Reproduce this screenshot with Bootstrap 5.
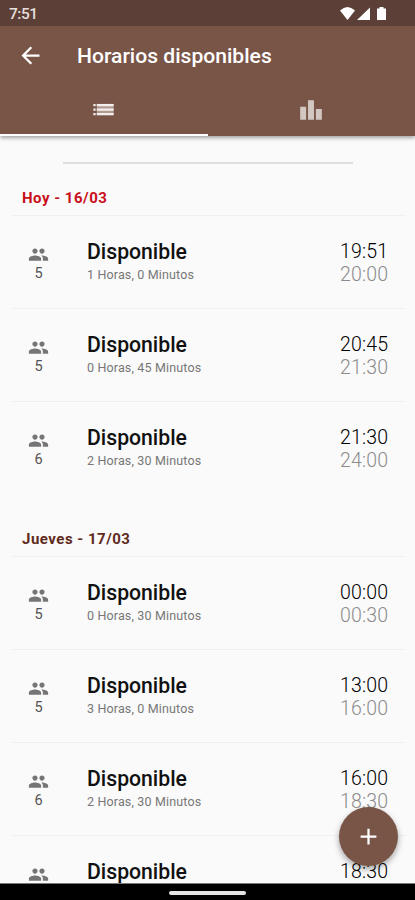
<!DOCTYPE html>
<html lang="es">
<head>
<meta charset="utf-8">
<meta name="viewport" content="width=device-width, initial-scale=1">
<title>Horarios disponibles</title>
<link rel="stylesheet" href="https://cdn.jsdelivr.net/npm/bootstrap@5.3.0/dist/css/bootstrap.min.css">
<style>
  body { font-family: Roboto, "Liberation Sans", sans-serif; background: #fafafa; color: #111; }
  svg { display: block; fill: currentColor; }
  .screen { height: 900px; }
  .status { height: 26px; background: #5c4037; padding: 1px 28px 0 9px; font-size: 15.5px; font-weight: 500; letter-spacing: -.5px; color: #e6dedb; }
  .status span { padding-top: 2px; }
  .app-top { background: #795548; color: #fff; box-shadow: 0 2px 4px rgba(0,0,0,.35); z-index: 2; }
  .title-bar { height: 59px; padding-left: 17px; }
  .title-bar h1 { font-size: 21.1px; font-weight: 500; margin: 1px 0 0 33px; line-height: 1; }
  .tabs { height: 51px; }
  .tab-item { color: #fff; border: 0; border-bottom: 2px solid transparent; border-radius: 0; padding: 0; }
  .tab-item.on { border-bottom-color: #fff; color: #f3efed; }
  .tab-item.off { color: #d3c7c2; }
  .rule { height: 2px; width: 290px; background: #dedede; margin: 26px auto 0 63px; }
  .slots { padding: 0 9px 0 12px; }
  .later { padding-top: 10px; }
  .day { height: 52px; padding: 25px 0 0 10px; font-size: 15px; font-weight: 700; line-height: 18px; border-bottom: 1px solid #f0f0f0; letter-spacing: .5px; color: #5f2b20; }
  .day.today { color: #c8101a; }
  .slot { height: 93px; padding: 23px 18px 0 0; border-bottom: 1px solid #f0f0f0; }
  .slot.final { border-color: transparent; }
  .people { width: 53px; color: #757575; padding-top: 5px; }
  .people span { font-size: 14.5px; line-height: 18px; color: #555; margin-top: 0; }
  .info { margin-left: 22px; }
  .name { font-size: 21.2px; font-weight: 500; line-height: 25px; }
  .span-text { font-size: 12.5px; line-height: 16px; color: #777; margin-top: 3px; letter-spacing: .15px; }
  .hours { font-size: 19.5px; font-weight: 300; line-height: 22.5px; width: 48px; padding-top: 2px; white-space: nowrap; color: #000; letter-spacing: .15px; }
  .hours .to { color: #8c8c8c; }
  .add { width: 59px; height: 59px; right: 17px; bottom: 18px; background: #795548; color: #fff; box-shadow: 0 3px 6px rgba(0,0,0,.35); z-index: 3; }
  .nav-strip { height: 17px; background: #000; border-top: 1px solid #777; }
  .nav-strip i { width: 77px; height: 4px; background: #e4e4e4; margin-top: 1px; }
</style>
</head>
<body>
<svg width="0" height="0" class="position-absolute">
  <symbol id="people" viewBox="0 0 24 24"><path d="M16 11c1.66 0 2.99-1.34 2.99-3S17.66 5 16 5s-3 1.34-3 3 1.34 3 3 3zm-8 0c1.66 0 2.99-1.34 2.99-3S9.66 5 8 5 5 6.34 5 8s1.34 3 3 3zm0 2c-2.33 0-7 1.17-7 3.500V19h14v-2.500c0-2.330-4.670-3.500-7-3.500zm8 0c-.29 0-.62.02-.97.05 1.160.84 1.970 1.970 1.970 3.450V19h6v-2.500c0-2.330-4.670-3.500-7-3.500z"/></symbol>
</svg>
<div class="screen d-flex flex-column position-relative overflow-hidden">
  <header class="app-top position-relative flex-shrink-0">
    <div class="status d-flex align-items-center justify-content-between">
      <span>7:51</span>
      <div class="d-flex align-items-center text-white">
        <svg width="48" height="16" viewBox="0 0 48 16"><path d="M1 4.500Q8.500 -2.500 16 4.500L8.500 14z"/><path d="M31 1.500V14H18z"/><path d="M40.500 1h4v1.500h2.500V14h-9V2.500h2.500z"/></svg>
      </div>
    </div>
    <div class="title-bar d-flex align-items-center">
      <svg width="27" height="27" viewBox="0 0 24 24"><path d="M20 11H7.830l5.590-5.590L12 4l-8 8 8 8 1.410-1.410L7.830 13H20v-2z"/></svg>
      <h1>Horarios disponibles</h1>
    </div>
    <nav class="tabs d-flex">
      <button class="btn tab-item on w-50 d-flex align-items-center justify-content-center" aria-label="Lista">
        <svg width="27" height="27" viewBox="0 0 24 24"><path d="M3 13h2v-2H3v2zm0 4h2v-2H3v2zm0-8h2V7H3v2zm3 4h15v-2H6v2zm0 4h15v-2H6v2zM6 7v2h15V7H6z"/><path d="M6 7h15v10H6z" opacity=".45"/></svg>
      </button>
      <button class="btn tab-item off w-50 d-flex align-items-center justify-content-center" aria-label="Gráfico">
        <svg width="26" height="26" viewBox="0 0 24 24"><path d="M7.500 21H2V9h5.500v12zm7.250-18h-5.500v18h5.500V3zM22 11h-5.500v10H22V11z"/></svg>
      </button>
    </nav>
  </header>
  <main class="flex-grow-1 overflow-hidden">
    <div class="rule"></div>
    <section class="slots">
      <div class="day today">Hoy - 16/03</div>
      <div class="slot d-flex"><div class="people d-flex flex-column align-items-center"><svg width="21" height="21"><use href="#people"/></svg><span>5</span></div><div class="info flex-grow-1"><div class="name">Disponible</div><div class="span-text">1 Horas, 0 Minutos</div></div><div class="hours"><div>19:51</div><div class="to">20:00</div></div></div>
      <div class="slot d-flex"><div class="people d-flex flex-column align-items-center"><svg width="21" height="21"><use href="#people"/></svg><span>5</span></div><div class="info flex-grow-1"><div class="name">Disponible</div><div class="span-text">0 Horas, 45 Minutos</div></div><div class="hours"><div>20:45</div><div class="to">21:30</div></div></div>
      <div class="slot final d-flex"><div class="people d-flex flex-column align-items-center"><svg width="21" height="21"><use href="#people"/></svg><span>6</span></div><div class="info flex-grow-1"><div class="name">Disponible</div><div class="span-text">2 Horas, 30 Minutos</div></div><div class="hours"><div>21:30</div><div class="to">24:00</div></div></div>
    </section>
    <section class="slots later">
      <div class="day">Jueves - 17/03</div>
      <div class="slot d-flex"><div class="people d-flex flex-column align-items-center"><svg width="21" height="21"><use href="#people"/></svg><span>5</span></div><div class="info flex-grow-1"><div class="name">Disponible</div><div class="span-text">0 Horas, 30 Minutos</div></div><div class="hours"><div>00:00</div><div class="to">00:30</div></div></div>
      <div class="slot d-flex"><div class="people d-flex flex-column align-items-center"><svg width="21" height="21"><use href="#people"/></svg><span>5</span></div><div class="info flex-grow-1"><div class="name">Disponible</div><div class="span-text">3 Horas, 0 Minutos</div></div><div class="hours"><div>13:00</div><div class="to">16:00</div></div></div>
      <div class="slot d-flex"><div class="people d-flex flex-column align-items-center"><svg width="21" height="21"><use href="#people"/></svg><span>6</span></div><div class="info flex-grow-1"><div class="name">Disponible</div><div class="span-text">2 Horas, 30 Minutos</div></div><div class="hours"><div>16:00</div><div class="to">18:30</div></div></div>
      <div class="slot d-flex"><div class="people d-flex flex-column align-items-center"><svg width="21" height="21"><use href="#people"/></svg></div><div class="info flex-grow-1"><div class="name">Disponible</div></div><div class="hours"><div>18:30</div></div></div>
    </section>
  </main>
  <button class="add btn rounded-circle position-absolute p-0 border-0 d-flex align-items-center justify-content-center mb-3" aria-label="Agregar">
    <svg width="27" height="27" viewBox="0 0 24 24"><path d="M19 13h-6v6h-2v-6H5v-2h6V5h2v6h6v2z"/></svg>
  </button>
  <footer class="nav-strip d-flex align-items-center justify-content-center flex-shrink-0"><i class="rounded-pill"></i></footer>
</div>
<script src="https://cdn.jsdelivr.net/npm/bootstrap@5.3.0/dist/js/bootstrap.bundle.min.js"></script>
</body>
</html>
